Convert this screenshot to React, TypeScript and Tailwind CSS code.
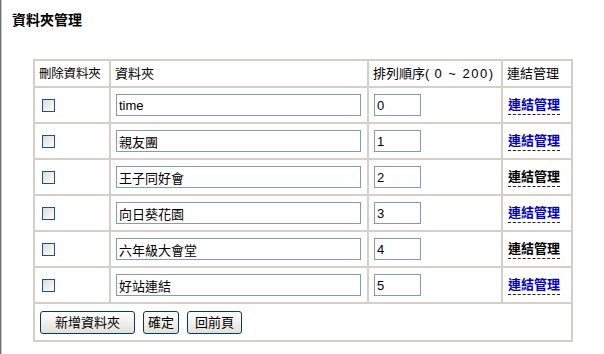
const folders = [
  { name: "time", order: "0", visited: false },
  { name: "親友團", order: "1", visited: false },
  { name: "王子同好會", order: "2", visited: true },
  { name: "向日葵花園", order: "3", visited: false },
  { name: "六年級大會堂", order: "4", visited: true },
  { name: "好站連結", order: "5", visited: false },
];

const font = "font-['Liberation_Sans','Noto_Sans_CJK_TC',sans-serif]";
const cell = "border-2 border-[#d4d0c8] px-[4px] align-middle whitespace-nowrap";

function Checkbox() {
  return (
    <span className="inline-block h-[13px] w-[13px] border border-[#1c5180] bg-gradient-to-br from-[#dcdcd7] to-[#ffffff]" />
  );
}

function Button({ label, width }: { label: string; width: string }) {
  return (
    <button
      className={`${width} h-[23px] rounded-[3px] border border-[#003c74] bg-gradient-to-b from-[#ffffff] to-[#e3e1d6] text-[13px] leading-none text-black`}
    >
      {label}
    </button>
  );
}

export default function App() {
  return (
    <main className={`h-[354px] w-[604px] overflow-hidden bg-white text-black ${font}`}>
      <div className="flex h-full border-l border-[#6f6f6f]">
        <div className="h-full w-px bg-[#c8c8c8]" />
        <div className="flex-1 pl-[10px] pt-[12px]">
          <h1 className="text-[14px] font-bold leading-[16px]">資料夾管理</h1>

          <table className="ml-[21px] mt-[31px] w-[538px] table-fixed border-collapse border-r-2 border-b-2 border-r-[#a8a8a0] border-b-[#a8a8a0] text-[13px] leading-[16px]">
            <colgroup>
              <col className="w-[76px]" />
              <col className="w-[258px]" />
              <col className="w-[134px]" />
              <col className="w-[70px]" />
            </colgroup>
            <thead>
              <tr className="h-[27px]">
                <th className={`${cell} overflow-hidden text-left text-[12.5px] font-normal tracking-[-0.2px]`}>刪除資料夾</th>
                <th className={`${cell} text-left font-normal`}>資料夾</th>
                <th className={`${cell} text-left font-normal`}>
                  排列順序(<span className="tracking-[1.5px]">&nbsp;0&nbsp;~&nbsp;200</span>)
                </th>
                <th className={`${cell} text-left font-normal`}>連結管理</th>
              </tr>
            </thead>
            <tbody>
              {folders.map((f) => (
                <tr key={f.name} className="h-[36px]">
                  <td className={`${cell} pl-[7px]`}>
                    <div className="flex items-center">
                      <Checkbox />
                    </div>
                  </td>
                  <td className={`${cell} px-[5px]`}>
                    <input
                      readOnly
                      value={f.name}
                      className="block h-[22px] w-[245px] border border-[#7f9db9] px-[2px] text-[13px] outline-none"
                    />
                  </td>
                  <td className={`${cell} px-[5px]`}>
                    <input
                      readOnly
                      value={f.order}
                      className="block h-[22px] w-[47px] border border-[#7f9db9] px-[2px] text-[13px] outline-none"
                    />
                  </td>
                  <td className={`${cell} px-[5px]`}>
                    <a
                      href="#"
                      className={`border-b border-dashed border-[#222] pb-[2px] font-bold ${f.visited ? "text-black" : "text-[#0000cc]"}`}
                    >
                      連結管理
                    </a>
                  </td>
                </tr>
              ))}
              <tr className="h-[38px]">
                <td colSpan={4} className={`${cell} pl-[5px]`}>
                  <div className="flex items-center gap-[8px]">
                    <Button label="新增資料夾" width="w-[95px]" />
                    <Button label="確定" width="w-[36px]" />
                    <Button label="回前頁" width="w-[55px]" />
                  </div>
                </td>
              </tr>
            </tbody>
          </table>
        </div>
      </div>
    </main>
  );
}
